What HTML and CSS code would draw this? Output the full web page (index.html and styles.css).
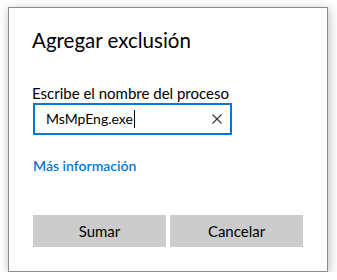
FILE: index.html
```html
<!DOCTYPE html>
<html lang="es">
<head>
<meta charset="utf-8">
<title>Agregar exclusión</title>
<link rel="stylesheet" href="styles.css">
</head>
<body>
<div class="dialog">
  <h1 class="title">Agregar exclusión</h1>
  <label class="label">Escribe el nombre del proceso</label>
  <div class="field">
    <span class="value">MsMpEng.exe</span><span class="caret"></span>
    <svg class="clear" width="10" height="10" viewBox="0 0 10 10" aria-hidden="true">
      <path d="M0.5 0.5 L9.5 9.5 M9.5 0.5 L0.5 9.5" stroke="#333" stroke-width="1.1" fill="none"/>
    </svg>
  </div>
  <a class="link" href="#">Más información</a>
  <div class="buttons">
    <button class="btn">Sumar</button>
    <button class="btn">Cancelar</button>
  </div>
</div>
</body>
</html>
```
FILE: styles.css
```css
html, body {
  margin: 0;
  padding: 0;
  background: #ffffff;
}
body {
  font-family: "Lato", "Open Sans", sans-serif;
  color: #000;
}
.dialog {
  box-sizing: border-box;
  width: 320px;
  height: 265px;
  margin: 7px 0 0 8px;
  border: 1px solid #8c8c8c;
  background: #fff;
  box-shadow: 1px 2px 10px rgba(0, 0, 0, 0.28);
  padding: 18px 24px 24px 23px;
  display: flex;
  flex-direction: column;
}
.title {
  margin: 0;
  font-size: 20.5px;
  font-weight: 400;
  line-height: 28px;
}
.label {
  margin-top: 29px;
  font-size: 15px;
  line-height: 20px;
}
.field {
  box-sizing: border-box;
  width: 199px;
  height: 32px;
  margin-top: 0px;
  margin-left: 1px;
  border: 2px solid #0078d7;
  display: flex;
  align-items: center;
  padding: 0 8px 0 11px;
  font-size: 14px;
}
.value {
  line-height: 20px;
}
.caret {
  width: 1px;
  height: 18px;
  background: #000;
  margin-left: 1px;
}
.clear {
  margin-left: auto;
}
.link {
  margin-top: 21px;
  margin-left: 1px;
  font-size: 14px;
  font-weight: 600;
  line-height: 20px;
  color: #0078d7;
  text-decoration: none;
  align-self: flex-start;
}
.buttons {
  margin-top: auto;
  margin-left: 1px;
  display: grid;
  grid-template-columns: 133px 133px;
  gap: 4px;
}
.btn {
  height: 32px;
  border: none;
  background: #cccccc;
  font-family: inherit;
  font-size: 15px;
  color: #000;
  padding: 0;
}
```
